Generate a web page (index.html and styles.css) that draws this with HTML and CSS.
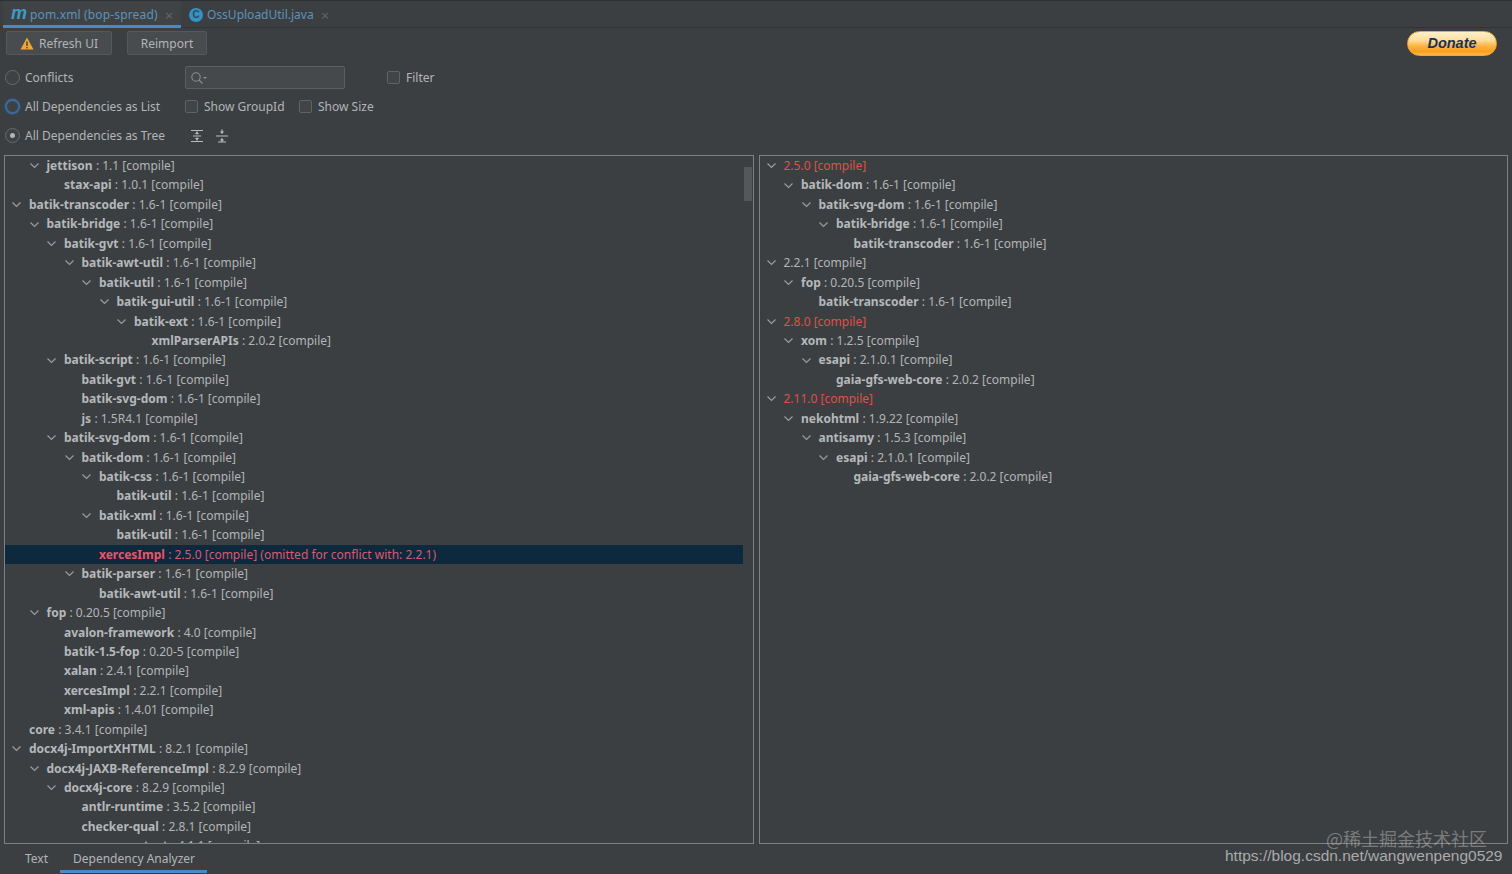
FILE: index.html
```html
<!DOCTYPE html>
<html lang="en">
<head>
<meta charset="utf-8">
<title>pom.xml (bop-spread)</title>
<link rel="stylesheet" href="styles.css">
</head>
<body>
<svg class="defs" width="0" height="0"><defs>
<symbol id="chev" viewBox="0 0 9 9"><path d="M0.5 2.5 L4.5 6.5 L8.5 2.5" fill="none" stroke="#9a9da0" stroke-width="1.2"/></symbol>
</defs></svg>
<div class="app">
  <div class="tabs">
    <div class="tab active"><span class="m-icon">m</span><span class="tab-label">pom.xml (bop-spread)</span><span class="tab-x">×</span></div>
    <div class="tab"><span class="c-icon">C</span><span class="tab-label">OssUploadUtil.java</span><span class="tab-x">×</span></div>
  </div>
  <div class="toolbar">
    <button class="btn btn-refresh"><svg width="14" height="13" viewBox="0 0 14 13"><path d="M7 0.5 L13.5 12.5 H0.5 Z" fill="#f0a732"/><rect x="6.3" y="4.5" width="1.4" height="4.5" fill="#3c3f41"/><rect x="6.3" y="10" width="1.4" height="1.4" fill="#3c3f41"/></svg>Refresh UI</button>
    <button class="btn btn-reimport">Reimport</button>
    <div class="donate">Donate</div>
  </div>
  <div class="opt opt-a">
    <span class="radio"></span><span class="opt-label w-a">Conflicts</span>
    <div class="search"><svg width="18" height="14" viewBox="0 0 18 14"><circle cx="6" cy="6" r="4.2" fill="none" stroke="#8c9092" stroke-width="1.1"/><path d="M9 9 L12.5 12.5" stroke="#8c9092" stroke-width="1.1"/><path d="M13 6 H17 L15 8 Z" fill="#8c9092"/></svg></div>
    <span class="check"></span><span class="opt-label">Filter</span>
  </div>
  <div class="opt opt-b">
    <span class="radio focus"></span><span class="opt-label w-a">All Dependencies as List</span>
    <span class="check"></span><span class="opt-label w-b">Show GroupId</span>
    <span class="check"></span><span class="opt-label">Show Size</span>
  </div>
  <div class="opt opt-c">
    <span class="radio on"></span><span class="opt-label w-a">All Dependencies as Tree</span>
    <svg class="tool" width="14" height="14" viewBox="0 0 14 14"><path d="M1 1.5 H13 M1 12.5 H13 M3 7 H11 M7 2.5 V5.5 M7 8.5 V11.5" stroke="#b8bbbd" stroke-width="1.2" fill="none"/><path d="M4.8 5 L7 3 L9.2 5 Z M4.8 9 L7 11 L9.2 9 Z" fill="#b8bbbd"/></svg>
    <svg class="tool tool2" width="14" height="14" viewBox="0 0 14 14"><path d="M1 7 H13 M7 0.5 V3 M7 11 V13.5 M3 13 H11" stroke="#b8bbbd" stroke-width="1.2" fill="none"/><path d="M4.8 2.5 L7 5 L9.2 2.5 Z M4.8 11.5 L7 9 L9.2 11.5 Z" fill="#b8bbbd"/></svg>
  </div>
  <div class="panels">
    <div class="panel">
      <div class="thumb"></div>
      <div class="row l1"><svg class="ch"><use href="#chev"/></svg><b>jettison</b> : 1.1 [compile]</div>
      <div class="row l2 leaf"><b>stax-api</b> : 1.0.1 [compile]</div>
      <div class="row l0"><svg class="ch"><use href="#chev"/></svg><b>batik-transcoder</b> : 1.6-1 [compile]</div>
      <div class="row l1"><svg class="ch"><use href="#chev"/></svg><b>batik-bridge</b> : 1.6-1 [compile]</div>
      <div class="row l2"><svg class="ch"><use href="#chev"/></svg><b>batik-gvt</b> : 1.6-1 [compile]</div>
      <div class="row l3"><svg class="ch"><use href="#chev"/></svg><b>batik-awt-util</b> : 1.6-1 [compile]</div>
      <div class="row l4"><svg class="ch"><use href="#chev"/></svg><b>batik-util</b> : 1.6-1 [compile]</div>
      <div class="row l5"><svg class="ch"><use href="#chev"/></svg><b>batik-gui-util</b> : 1.6-1 [compile]</div>
      <div class="row l6"><svg class="ch"><use href="#chev"/></svg><b>batik-ext</b> : 1.6-1 [compile]</div>
      <div class="row l7 leaf"><b>xmlParserAPIs</b> : 2.0.2 [compile]</div>
      <div class="row l2"><svg class="ch"><use href="#chev"/></svg><b>batik-script</b> : 1.6-1 [compile]</div>
      <div class="row l3 leaf"><b>batik-gvt</b> : 1.6-1 [compile]</div>
      <div class="row l3 leaf"><b>batik-svg-dom</b> : 1.6-1 [compile]</div>
      <div class="row l3 leaf"><b>js</b> : 1.5R4.1 [compile]</div>
      <div class="row l2"><svg class="ch"><use href="#chev"/></svg><b>batik-svg-dom</b> : 1.6-1 [compile]</div>
      <div class="row l3"><svg class="ch"><use href="#chev"/></svg><b>batik-dom</b> : 1.6-1 [compile]</div>
      <div class="row l4"><svg class="ch"><use href="#chev"/></svg><b>batik-css</b> : 1.6-1 [compile]</div>
      <div class="row l5 leaf"><b>batik-util</b> : 1.6-1 [compile]</div>
      <div class="row l4"><svg class="ch"><use href="#chev"/></svg><b>batik-xml</b> : 1.6-1 [compile]</div>
      <div class="row l5 leaf"><b>batik-util</b> : 1.6-1 [compile]</div>
      <div class="row l4 leaf selected"><b>xercesImpl</b> : 2.5.0 [compile] (omitted for conflict with: 2.2.1)</div>
      <div class="row l3"><svg class="ch"><use href="#chev"/></svg><b>batik-parser</b> : 1.6-1 [compile]</div>
      <div class="row l4 leaf"><b>batik-awt-util</b> : 1.6-1 [compile]</div>
      <div class="row l1"><svg class="ch"><use href="#chev"/></svg><b>fop</b> : 0.20.5 [compile]</div>
      <div class="row l2 leaf"><b>avalon-framework</b> : 4.0 [compile]</div>
      <div class="row l2 leaf"><b>batik-1.5-fop</b> : 0.20-5 [compile]</div>
      <div class="row l2 leaf"><b>xalan</b> : 2.4.1 [compile]</div>
      <div class="row l2 leaf"><b>xercesImpl</b> : 2.2.1 [compile]</div>
      <div class="row l2 leaf"><b>xml-apis</b> : 1.4.01 [compile]</div>
      <div class="row l0 leaf"><b>core</b> : 3.4.1 [compile]</div>
      <div class="row l0"><svg class="ch"><use href="#chev"/></svg><b>docx4j-ImportXHTML</b> : 8.2.1 [compile]</div>
      <div class="row l1"><svg class="ch"><use href="#chev"/></svg><b>docx4j-JAXB-ReferenceImpl</b> : 8.2.9 [compile]</div>
      <div class="row l2"><svg class="ch"><use href="#chev"/></svg><b>docx4j-core</b> : 8.2.9 [compile]</div>
      <div class="row l3 leaf"><b>antlr-runtime</b> : 3.5.2 [compile]</div>
      <div class="row l3 leaf"><b>checker-qual</b> : 2.8.1 [compile]</div>
      <div class="row l3 leaf"><b>commons-text</b> : 4.1.1 [compile]</div>
    </div>
    <div class="panel">
      <div class="row l0 red"><svg class="ch"><use href="#chev"/></svg>2.5.0 [compile]</div>
      <div class="row l1"><svg class="ch"><use href="#chev"/></svg><b>batik-dom</b> : 1.6-1 [compile]</div>
      <div class="row l2"><svg class="ch"><use href="#chev"/></svg><b>batik-svg-dom</b> : 1.6-1 [compile]</div>
      <div class="row l3"><svg class="ch"><use href="#chev"/></svg><b>batik-bridge</b> : 1.6-1 [compile]</div>
      <div class="row l4 leaf"><b>batik-transcoder</b> : 1.6-1 [compile]</div>
      <div class="row l0"><svg class="ch"><use href="#chev"/></svg>2.2.1 [compile]</div>
      <div class="row l1"><svg class="ch"><use href="#chev"/></svg><b>fop</b> : 0.20.5 [compile]</div>
      <div class="row l2 leaf"><b>batik-transcoder</b> : 1.6-1 [compile]</div>
      <div class="row l0 red"><svg class="ch"><use href="#chev"/></svg>2.8.0 [compile]</div>
      <div class="row l1"><svg class="ch"><use href="#chev"/></svg><b>xom</b> : 1.2.5 [compile]</div>
      <div class="row l2"><svg class="ch"><use href="#chev"/></svg><b>esapi</b> : 2.1.0.1 [compile]</div>
      <div class="row l3 leaf"><b>gaia-gfs-web-core</b> : 2.0.2 [compile]</div>
      <div class="row l0 red"><svg class="ch"><use href="#chev"/></svg>2.11.0 [compile]</div>
      <div class="row l1"><svg class="ch"><use href="#chev"/></svg><b>nekohtml</b> : 1.9.22 [compile]</div>
      <div class="row l2"><svg class="ch"><use href="#chev"/></svg><b>antisamy</b> : 1.5.3 [compile]</div>
      <div class="row l3"><svg class="ch"><use href="#chev"/></svg><b>esapi</b> : 2.1.0.1 [compile]</div>
      <div class="row l4 leaf"><b>gaia-gfs-web-core</b> : 2.0.2 [compile]</div>
    </div>
  </div>
  <div class="bottom">
    <div class="btab btab-text">Text</div>
    <div class="btab active">Dependency Analyzer</div>
  </div>
  <div class="mark-cn">@稀土掘金技术社区</div>
  <div class="mark-url">https://blog.csdn.net/wangwenpeng0529</div>
</div>
</body>
</html>
```
FILE: styles.css
```css
* { box-sizing: border-box; }
html, body { margin: 0; padding: 0; }
body { background: #3c3f41; color: #b2b5b7; font-family: "Noto Sans", "Open Sans", sans-serif; font-size: 12px; overflow: hidden; }
.defs { position: absolute; }
.app { position: relative; width: 1512px; height: 874px; display: flex; flex-direction: column; overflow: hidden; border-top: 1px solid #2e3031; }
.tabs { height: 27px; flex: none; display: flex; border-bottom: 1px solid #323435; padding-left: 3px; }
.tab { display: flex; align-items: center; height: 27px; padding: 0 0 0 8px; font-size: 12px; color: #5c93b8; }
.tab.active { width: 178px; background: #404345; border-bottom: 3px solid #4a88c7; padding: 3px 0 0 8px; letter-spacing: 0.15px; }
.m-icon { color: #3f9bc4; font: italic 700 18px/1 "Liberation Sans", sans-serif; width: 19px; margin-top: -4px; }
.c-icon { width: 14px; height: 14px; border-radius: 50%; background: #3592c4; color: #2d4a5c; font: 700 10px/14px "Liberation Sans", sans-serif; text-align: center; margin-right: 4px; }
.tab-label { white-space: nowrap; }
.tab-x { color: #5f6365; margin-left: 7px; font-size: 15px; }
.toolbar { height: 30px; flex: none; display: flex; align-items: center; padding: 0 15px 0 6px; }
.btn { height: 24px; background: #494c4e; border: 1px solid #56595b; border-radius: 2px; color: #b2b5b7; font: 12px "Noto Sans", sans-serif; display: flex; align-items: center; padding: 0; justify-content: center; }
.btn-refresh { width: 106px; gap: 5px; margin-right: 15px; }
.btn-reimport { width: 80px; }
.donate { margin-left: auto; width: 90px; height: 25px; border-radius: 13px; background: linear-gradient(#fff0cc 0%, #ffdf9e 35%, #fdb544 60%, #fa9f1c 85%, #ffb84d 100%); border: 1px solid #f4a62a; color: #13335c; font: italic 700 14.5px/23px "Liberation Sans", sans-serif; text-align: center; }
.opt { display: flex; align-items: center; flex: none; height: 29px; padding-left: 5px; }
.opt-a { margin-top: 5px; }
.opt-c { margin-bottom: 5px; }
.radio { width: 15px; height: 15px; border-radius: 50%; border: 1px solid #686b6d; background: #3f4244; margin-right: 5px; flex: none; position: relative; }
.radio.focus { border: 2px solid #3d6a96; box-shadow: 0 0 0 1px #2f5272; }
.radio.on::after { content: ""; width: 5px; height: 5px; border-radius: 50%; background: #b2b5b7; position: absolute; left: 4px; top: 4px; }
.opt-label { white-space: nowrap; }
.w-a { width: 160px; }
.w-b { width: 95px; }
.search { width: 160px; height: 23px; background: #45494b; border: 1px solid #5c5f61; border-radius: 2px; display: flex; align-items: center; padding-left: 4px; margin-right: 42px; }
.check { width: 13px; height: 13px; background: #424547; border: 1px solid #606366; border-radius: 2px; margin-right: 6px; flex: none; }
.tool { margin-left: 5px; }
.tool2 { margin-left: 11px; }
.panels { flex: 1; min-height: 0; display: flex; gap: 5px; padding: 0 4px; }
.panel { position: relative; width: 750px; height: 689px; border: 1px solid #7e8183; overflow: hidden; }
.row { position: relative; height: 19.44px; line-height: 19.44px; white-space: nowrap; display: flex; align-items: center; }
.row b { font-weight: 700; color: #b4b8bb; margin-right: 3.3px; }
.row .ch { width: 9px; height: 9px; margin-right: 8px; flex: none; }
.l0 { padding-left: 7px; }
.l1 { padding-left: 24.5px; }
.l2 { padding-left: 42px; }
.l3 { padding-left: 59.5px; }
.l4 { padding-left: 77px; }
.l5 { padding-left: 94.5px; }
.l6 { padding-left: 112px; }
.l7 { padding-left: 129.5px; }
.leaf::before { content: ""; width: 17px; flex: none; }
.selected { background: #0d293e; color: #dc5a6c; width: 738px; }
.selected b { color: #ec5468; }
.red { color: #df5148; }
.thumb { position: absolute; right: 1px; top: 11px; width: 8px; height: 34px; background: #55585a; z-index: 1; }
.bottom { height: 30px; flex: none; display: flex; padding-left: 12px; }
.btab { height: 29px; line-height: 29px; padding: 0 13px; white-space: nowrap; }
.btab-text { width: 48px; }
.btab.active { border-bottom: 3px solid #4a88c7; width: 147px; }
.mark-cn { position: absolute; left: 1326px; top: 824px; font: 18px "Noto Sans CJK SC", sans-serif; color: rgba(200,200,200,.45); white-space: nowrap; }
.mark-url { position: absolute; left: 1225px; top: 846px; font: 15.5px "Liberation Sans", sans-serif; color: #a9abac; white-space: nowrap; }
```
